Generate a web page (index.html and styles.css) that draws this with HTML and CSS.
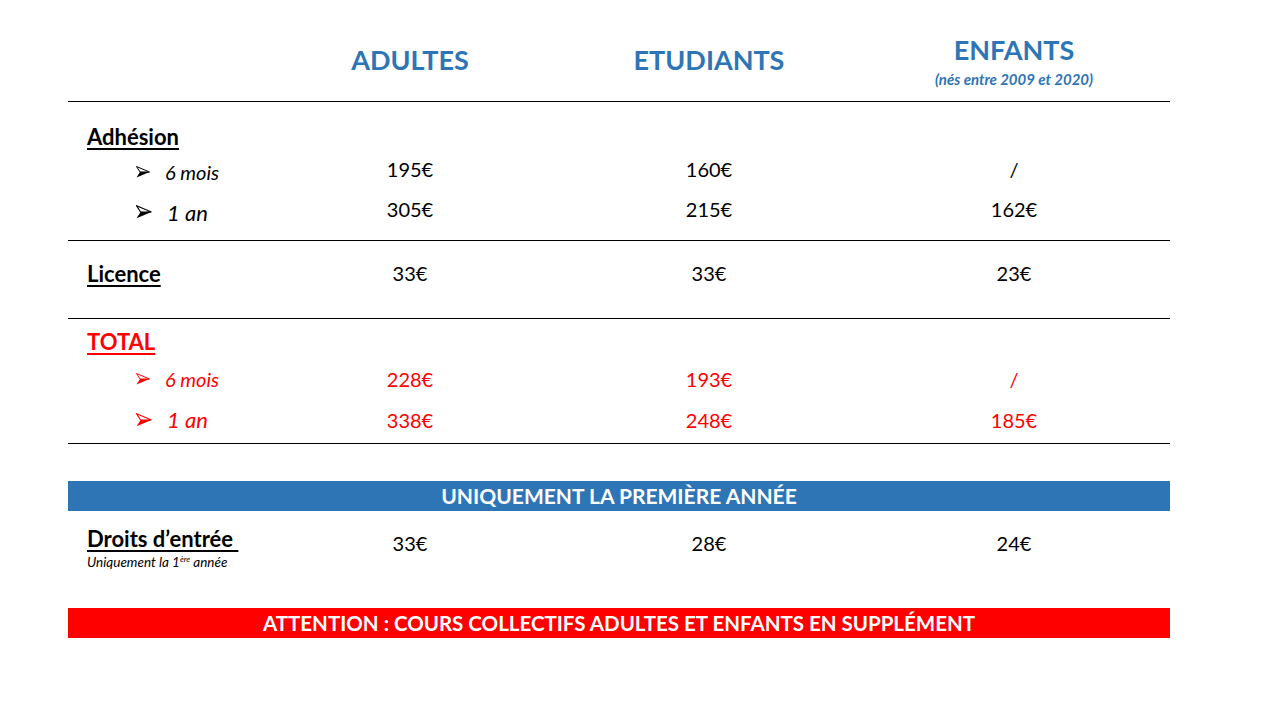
FILE: index.html
```html
<!DOCTYPE html>
<html lang="fr">
<head>
<meta charset="utf-8">
<title>Tarifs</title>
<link rel="stylesheet" href="styles.css">
</head>
<body>
<div class="sheet">
  <div class="grid head">
    <div></div>
    <div class="col-title">ADULTES</div>
    <div class="col-title">ETUDIANTS</div>
    <div class="col-title stacked">ENFANTS<span class="sub">(nés entre 2009 et 2020)</span></div>
  </div>

  <div class="section s-adh">
    <div class="grid row r-title">
      <div class="label">Adhésion</div><div></div><div></div><div></div>
    </div>
    <div class="grid row r-small">
      <div class="item small"><svg class="arrow a-small" viewBox="0 0 14 12"><polygon points="0.5,0.5 13.5,6 4,6" fill="#fff" stroke="#000" stroke-width="1"/><polygon points="4,6 13.5,6 0.5,11.5" fill="#000"/></svg>6 mois</div>
      <div class="val">195€</div><div class="val">160€</div><div class="val">/</div>
    </div>
    <div class="grid row r-big">
      <div class="item big"><svg class="arrow a-big" viewBox="0 0 14 12"><polygon points="0.5,0.5 13.5,6 4,6" fill="#fff" stroke="#000" stroke-width="1"/><polygon points="4,6 13.5,6 0.5,11.5" fill="#000"/></svg>1 an</div>
      <div class="val">305€</div><div class="val">215€</div><div class="val">162€</div>
    </div>
  </div>

  <div class="section s-lic">
    <div class="grid row r-title">
      <div class="label">Licence</div>
      <div class="val">33€</div><div class="val">33€</div><div class="val">23€</div>
    </div>
  </div>

  <div class="section s-total red">
    <div class="grid row r-title">
      <div class="label">TOTAL</div><div></div><div></div><div></div>
    </div>
    <div class="grid row r-mid">
      <div class="item small"><svg class="arrow a-small" viewBox="0 0 14 12"><polygon points="0.5,0.5 13.5,6 4,6" fill="#fff" stroke="#f00" stroke-width="1"/><polygon points="4,6 13.5,6 0.5,11.5" fill="#f00"/></svg>6 mois</div>
      <div class="val">228€</div><div class="val">193€</div><div class="val">/</div>
    </div>
    <div class="grid row r-big2">
      <div class="item big"><svg class="arrow a-big" viewBox="0 0 14 12"><polygon points="0.5,0.5 13.5,6 4,6" fill="#fff" stroke="#f00" stroke-width="1"/><polygon points="4,6 13.5,6 0.5,11.5" fill="#f00"/></svg>1 an</div>
      <div class="val">338€</div><div class="val">248€</div><div class="val">185€</div>
    </div>
  </div>

  <div class="banner blue">UNIQUEMENT LA PREMIÈRE ANNÉE</div>

  <div class="grid entry">
    <div class="entry-label">
      <span class="label">Droits d’entrée&nbsp;</span>
      <span class="note">Uniquement la 1<sup>ère</sup> année</span>
    </div>
    <div class="val">33€</div><div class="val">28€</div><div class="val">24€</div>
  </div>

  <div class="banner redbar">ATTENTION : COURS COLLECTIFS ADULTES ET ENFANTS EN SUPPLÉMENT</div>
</div>
</body>
</html>
```

FILE: styles.css
```css
html, body {
  margin: 0;
  padding: 0;
  background: #fff;
}
body {
  font-family: "Lato", "Open Sans", sans-serif;
  color: #000;
  width: 1280px;
  height: 720px;
  overflow: hidden;
}
.sheet {
  margin-left: 68px;
  width: 1102px;
}
.grid {
  display: grid;
  grid-template-columns: 192px 300px 298px 312px;
}
.head {
  height: 102px;
  border-bottom: 1px solid #000;
  box-sizing: border-box;
  align-items: center;
}
.col-title {
  text-align: center;
  color: #2e75b6;
  font-weight: 700;
  font-size: 27px;
  padding-top: 18px;
}
.col-title.stacked {
  display: flex;
  flex-direction: column;
  align-items: center;
  align-self: start;
  padding-top: 34px;
  line-height: 32px;
  height: 101px;
  box-sizing: border-box;
}
.sub {
  font-size: 15px;
  font-style: italic;
  line-height: 18px;
  margin-top: 4px;
}
.section {
  border-bottom: 1px solid #000;
}
.row {
  align-items: center;
}
.s-adh { padding-top: 15px; padding-bottom: 7px; }
.s-adh .r-title { height: 38px; }
.s-adh .r-small { height: 34px; }
.s-adh .r-big { height: 44px; }
.s-adh .r-small .val { padding-bottom: 6px; }
.s-adh .r-big .val { padding-bottom: 4px; }
.s-lic { padding-top: 13px; padding-bottom: 26px; }
.s-lic .r-title { height: 38px; }
.s-total { padding-top: 3px; padding-bottom: 2px; }
.s-total .r-title { height: 38px; }
.s-total .r-mid { height: 38px; }
.s-total .r-big2 { height: 43px; }
.label {
  font-weight: 700;
  font-size: 22px;
  text-decoration: underline;
  text-decoration-thickness: 2px;
  text-underline-offset: 3px;
  padding-left: 19px;
}
.item {
  font-style: italic;
  display: flex;
  align-items: center;
  padding-left: 68px;
}
.item.small { font-size: 20px; padding-top: 0; }
.item.big { font-size: 22px; padding-top: 2px; }
.s-total .item.small { padding-top: 0; }
.s-total .item.big { padding-top: 0; }
.arrow { display: block; margin-right: 15px; }
.a-small { width: 14px; height: 12px; }
.a-big { width: 16px; height: 14px; }
.val {
  text-align: center;
  font-size: 20px;
}
.red, .red .label { color: #f00; }
.banner {
  height: 30px;
  line-height: 30px;
  text-align: center;
  color: #fff;
  font-weight: 700;
  font-size: 21px;
}
.blue {
  background: #2e75b6;
  margin-top: 37px;
}
.redbar {
  background: #f00;
  font-size: 20.5px;
}
.entry {
  height: 97px;
  align-items: start;
}
.entry-label {
  display: flex;
  flex-direction: column;
  padding-top: 14px;
}
.entry-label .label {
  padding-left: 0;
  margin-left: 19px;
  align-self: flex-start;
}
.note {
  font-style: italic;
  font-size: 13.5px;
  padding-left: 19px;
  margin-top: 2px;
}
.note sup {
  font-size: 8px;
  vertical-align: 5px;
}
.entry .val {
  padding-top: 20px;
}
```
